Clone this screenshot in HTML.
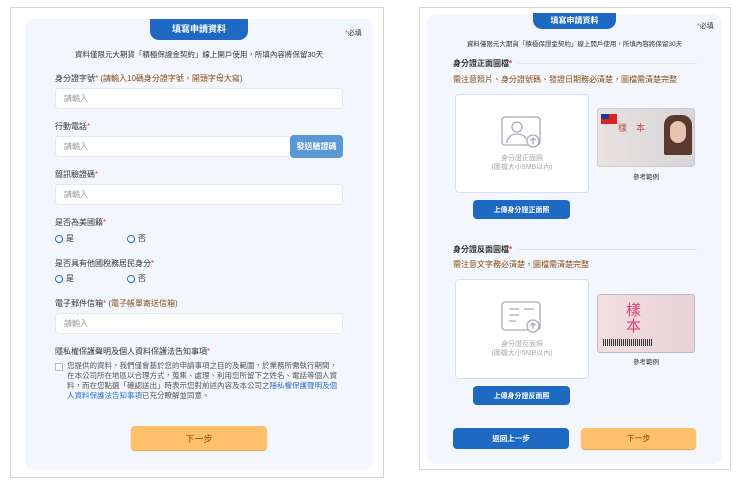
<!DOCTYPE html>
<html><head><meta charset="utf-8"><style>
*{box-sizing:border-box;margin:0;padding:0}
body{width:740px;height:486px;background:#fff;font-family:"Liberation Sans","Noto Sans CJK TC",sans-serif;position:relative;overflow:hidden;color:#333}
.a{position:absolute}
.frame{border:1px solid #d4d4d4;background:#fff}
.panel{background:#f3f7fd;border-radius:8px}
.tab{background:#1e6ac2;color:#fff;font-weight:bold;text-align:center;border-radius:0 0 9px 9px}
.req{color:#e04040}
.lbl{font-size:8px;color:#333}
.inp{background:#fff;border:1px solid #e2e8f0;border-radius:4px;font-size:8px;color:#999;padding-left:8px;display:flex;align-items:center}
.radio{font-size:8px;display:flex;align-items:center}
.radio i{width:8px;height:8px;border:1px solid #2a70c8;border-radius:50%;display:inline-block;margin-right:3px}
.btnO{background:#ffc06b;border-radius:4px;color:#7a4a10;font-size:9px;display:flex;align-items:center;justify-content:center;box-shadow:0 1px 1px #e0a050}
.btnB{background:#1e6ac2;border-radius:4px;color:#fff;font-size:8px;font-weight:bold;display:flex;align-items:center;justify-content:center}
.note{color:#8a4a10;font-size:8px}
.box{background:#fff;border:1px solid #d4e0f0;border-radius:4px}
.small{font-size:7px;color:#aaa;text-align:center;line-height:9px}
</style></head><body>
<div class="a frame" style="left:10px;top:7px;width:374px;height:471px"></div>
<div class="a panel" style="left:25px;top:19px;width:348px;height:451px"></div>
<div class="a tab" style="left:150px;top:19px;width:98px;height:21px;font-size:9px;line-height:21px">填寫申請資料</div>
<div class="a" style="left:345px;top:28px;font-size:7px"><span class="req">*</span>必填</div>
<div class="a" style="left:25px;top:49px;width:348px;text-align:center;font-size:7.5px">資料僅限元大期貨「積極保證金契約」線上開戶使用，所填內容將保留30天</div>
<div class="a lbl" style="left:55px;top:73px">身分證字號<span class="req">*</span> <span style="color:#8a4a10">(請輸入10碼身分證字號，開頭字母大寫)</span></div>
<div class="a inp" style="left:55px;top:88px;width:288px;height:21px">請輸入</div>
<div class="a lbl" style="left:55px;top:121px">行動電話<span class="req">*</span></div>
<div class="a inp" style="left:55px;top:136px;width:288px;height:21px">請輸入</div>
<div class="a btnB" style="left:290px;top:135px;width:53px;height:23px;background:#5b98d8">發送驗證碼</div>
<div class="a lbl" style="left:55px;top:169px">簡訊驗證碼<span class="req">*</span></div>
<div class="a inp" style="left:55px;top:184px;width:288px;height:21px">請輸入</div>
<div class="a lbl" style="left:55px;top:217px">是否為美國籍<span class="req">*</span></div>
<div class="a radio" style="left:55px;top:233px"><i></i>是</div>
<div class="a radio" style="left:127px;top:233px"><i></i>否</div>
<div class="a lbl" style="left:55px;top:258px">是否具有他國稅務居民身分<span class="req">*</span></div>
<div class="a radio" style="left:55px;top:273px"><i></i>是</div>
<div class="a radio" style="left:127px;top:273px"><i></i>否</div>
<div class="a lbl" style="left:55px;top:298px">電子郵件信箱<span class="req">*</span> <span style="color:#8a4a10">(電子帳單寄送信箱)</span></div>
<div class="a inp" style="left:55px;top:313px;width:288px;height:21px">請輸入</div>
<div class="a lbl" style="left:55px;top:346px">隱私權保護聲明及個人資料保護法告知事項<span class="req">*</span></div>
<div class="a" style="left:55px;top:363px;width:8px;height:8px;border:1px solid #bbb;background:#fff"></div>
<div class="a" style="left:67px;top:361px;width:276px;font-size:7.5px;line-height:10px;color:#555">您提供的資料，我們僅會基於您的申請事項之目的及範圍，於業務所需執行期間，在本公司所在地區以合理方式，蒐集、處理、利用您所留下之姓名、電話等個人資料，而在您點選「確認送出」時表示您對前述內容及本公司之<span style="color:#2a70c8">隱私權保護聲明及個人資料保護法告知事項</span>已充分瞭解並同意。</div>
<div class="a btnO" style="left:131px;top:426px;width:136px;height:24px">下一步</div>

<div class="a frame" style="left:419px;top:7px;width:312px;height:463px"></div>
<div class="a panel" style="left:427px;top:14px;width:295px;height:450px"></div>
<div class="a tab" style="left:533px;top:13px;width:83px;height:16px;font-size:8px;line-height:16px">填寫申請資料</div>
<div class="a" style="left:697px;top:21px;font-size:7px"><span class="req">*</span>必填</div>
<div class="a" style="left:427px;top:38px;width:295px;text-align:center;font-size:6.5px">資料僅限元大期貨「積極保證金契約」線上開戶使用，所填內容將保留30天</div>
<div class="a lbl" style="left:453px;top:58px;font-weight:bold">身分證正面圖檔<span class="req">*</span></div>
<div class="a" style="left:518px;top:63px;width:179px;border-top:1px solid #e2e8f0"></div>
<div class="a note" style="left:453px;top:74px">需注意照片、身分證號碼、發證日期務必清楚，圖檔需清楚完整</div>
<div class="a box" style="left:455px;top:94px;width:134px;height:99px"></div>
<svg class="a" style="left:500px;top:116px" width="44" height="32" viewBox="0 0 44 32" fill="none" stroke="#aab" stroke-width="1.3"><rect x="2" y="1" width="38" height="28" rx="3"/><circle cx="17" cy="11" r="5"/><path d="M7 27c0-6 5-9 10-9s8 2 9 5"/><circle cx="33" cy="25" r="6" fill="#fff"/><path d="M33 28v-6M30.5 24.5L33 22l2.5 2.5"/></svg>
<div class="a small" style="left:455px;top:154px;width:134px">身分證正面照<br>(圖檔大小5MB以內)</div>
<div class="a" style="left:597px;top:108px;width:98px;height:59px;border-radius:3px;background:linear-gradient(90deg,#e8e2e0,#d8d4d8);border:1px solid #ccc;overflow:hidden">
<div class="a" style="left:3px;top:5px;width:16px;height:10px;background:#d22"></div><div class="a" style="left:3px;top:5px;width:8px;height:5px;background:#1a3a9a"></div>
<div class="a" style="left:66px;top:6px;width:28px;height:40px;background:#5a3a30;border-radius:10px 10px 2px 2px"></div><div class="a" style="left:72px;top:12px;width:16px;height:22px;background:#e8c4b0;border-radius:8px"></div>
<div class="a" style="left:20px;top:12px;font-size:9px;color:#c44">樣　本</div>
</div>
<div class="a" style="left:597px;top:171px;width:98px;text-align:center;font-size:6.5px">參考範例</div>
<div class="a btnB" style="left:473px;top:200px;width:97px;height:19px;font-size:7px">上傳身分證正面照</div>

<div class="a lbl" style="left:453px;top:244px;font-weight:bold">身分證反面圖檔<span class="req">*</span></div>
<div class="a" style="left:518px;top:249px;width:179px;border-top:1px solid #e2e8f0"></div>
<div class="a note" style="left:453px;top:259px">需注意文字務必清楚，圖檔需清楚完整</div>
<div class="a box" style="left:455px;top:279px;width:134px;height:100px"></div>
<svg class="a" style="left:500px;top:301px" width="44" height="32" viewBox="0 0 44 32" fill="none" stroke="#aab" stroke-width="1.3"><rect x="2" y="1" width="38" height="28" rx="3"/><path d="M9 8h10M24 8h10M9 14h10M9 20h7"/><circle cx="33" cy="25" r="6" fill="#fff"/><path d="M33 28v-6M30.5 24.5L33 22l2.5 2.5"/></svg>
<div class="a small" style="left:455px;top:340px;width:134px">身分證反面照<br>(圖檔大小5MB以內)</div>
<div class="a" style="left:597px;top:294px;width:98px;height:59px;border-radius:3px;background:linear-gradient(90deg,#f2dfe2,#e8d2d8);border:1px solid #bbb;overflow:hidden">
<div class="a" style="left:28px;top:8px;font-size:15px;line-height:16px;color:#e04070">樣<br>本</div>
<div class="a" style="left:5px;top:44px;width:50px;height:7px;background:repeating-linear-gradient(90deg,#333 0 1px,transparent 1px 2px)"></div>
</div>
<div class="a" style="left:597px;top:356px;width:98px;text-align:center;font-size:6.5px">參考範例</div>
<div class="a btnB" style="left:473px;top:386px;width:97px;height:19px;font-size:7px">上傳身分證反面照</div>
<div class="a btnB" style="left:453px;top:428px;width:116px;height:21px;font-size:7.5px">返回上一步</div>
<div class="a btnO" style="left:581px;top:428px;width:115px;height:21px;font-size:8px">下一步</div>
</body></html>
